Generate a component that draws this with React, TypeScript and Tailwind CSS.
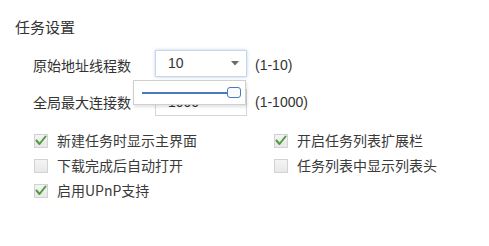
import React from "react";

const cjk = "font-['Microsoft_YaHei','Noto_Sans_CJK_SC',sans-serif]";

interface Option {
  label: string;
  checked: boolean;
}

const leftOptions: Option[] = [
  { label: "新建任务时显示主界面", checked: true },
  { label: "下载完成后自动打开", checked: false },
  { label: "启用UPnP支持", checked: true },
];

const rightOptions: Option[] = [
  { label: "开启任务列表扩展栏", checked: true },
  { label: "任务列表中显示列表头", checked: false },
];

const CheckBox: React.FC<{ checked: boolean }> = ({ checked }) => (
  <span className="w-[14px] h-[14px] shrink-0 border border-[#d2d2d2] bg-gradient-to-b from-[#f4f4f4] to-[#e8e8e8] flex items-center justify-center">
    {checked && (
      <svg width="12" height="11" viewBox="0 0 12 11">
        <path
          d="M1.5 5.5 L4.5 9 L10.5 1.5"
          fill="none"
          stroke="#4f9a3c"
          strokeWidth="2"
          strokeLinecap="round"
          strokeLinejoin="round"
        />
      </svg>
    )}
  </span>
);

const CheckRow: React.FC<{ option: Option }> = ({ option }) => (
  <div className="h-[25px] flex items-center gap-[9px]">
    <CheckBox checked={option.checked} />
    <span className="text-[14px] leading-[25px] text-[#3a3a3a]">{option.label}</span>
  </div>
);

const SelectBox: React.FC<{ value: string; focused?: boolean; children?: React.ReactNode }> = ({
  value,
  focused,
  children,
}) => (
  <div
    className={
      focused
        ? "relative w-[92px] h-[27px] border border-[#c9d6e3] shadow-[0_0_3px_rgba(120,170,220,0.5)] bg-white flex items-center pl-[12px] pr-[7px]"
        : "relative w-[92px] h-[27px] border border-[#d6d6d6] bg-white flex items-center pl-[12px] pr-[7px]"
    }
  >
    <span className="flex-1 text-[14px] text-[#333] font-['Liberation_Sans',sans-serif]">{value}</span>
    <svg width="8" height="5" viewBox="0 0 8 5">
      <path d="M0 0 H8 L4 4.5 Z" fill="#6a6a6a" />
    </svg>
    {children}
  </div>
);

const App: React.FC = () => {
  return (
    <div className={`w-[489px] h-[246px] bg-white overflow-hidden ${cjk}`}>
      {/* Title */}
      <div className="pt-[17px] pl-[15px] text-[15px] leading-[20px] text-[#333]">任务设置</div>

      {/* Number settings */}
      <div className="mt-[13px] pl-[33px] flex flex-col gap-[12px]">
        <div className="flex items-center">
          <span className="w-[122px] text-[14px] text-[#333] pt-[3px]">原始地址线程数</span>
          <SelectBox value="10" focused>
            {/* slider popup */}
            <div className="absolute left-[-23px] top-[29px] w-[113px] h-[25px] bg-white border border-[#cfcfcf] shadow-[1px_2px_3px_rgba(0,0,0,0.12)] z-10">
              <div className="absolute left-[8px] top-[11px] w-[88px] h-[2px] bg-[#4a78c2]" />
              <div className="absolute left-[93px] top-[6px] w-[14px] h-[11px] rounded-[3px] border border-[#4a78c2] bg-[#f8fafe]" />
            </div>
          </SelectBox>
          <span className="ml-[8px] text-[14px] text-[#333] font-['Liberation_Sans',sans-serif] pt-[3px]">(1-10)</span>
        </div>
        <div className="flex items-center">
          <span className="w-[122px] text-[14px] text-[#333]">全局最大连接数</span>
          <SelectBox value="1000" />
          <span className="ml-[8px] text-[14px] text-[#333] font-['Liberation_Sans',sans-serif]">(1-1000)</span>
        </div>
      </div>

      {/* Checkbox options */}
      <div className="mt-[12px] pl-[34px] grid grid-cols-[240px_1fr]">
        <div className="flex flex-col">
          {leftOptions.map((o) => (
            <CheckRow key={o.label} option={o} />
          ))}
        </div>
        <div className="flex flex-col">
          {rightOptions.map((o) => (
            <CheckRow key={o.label} option={o} />
          ))}
        </div>
      </div>
    </div>
  );
};

export default App;
